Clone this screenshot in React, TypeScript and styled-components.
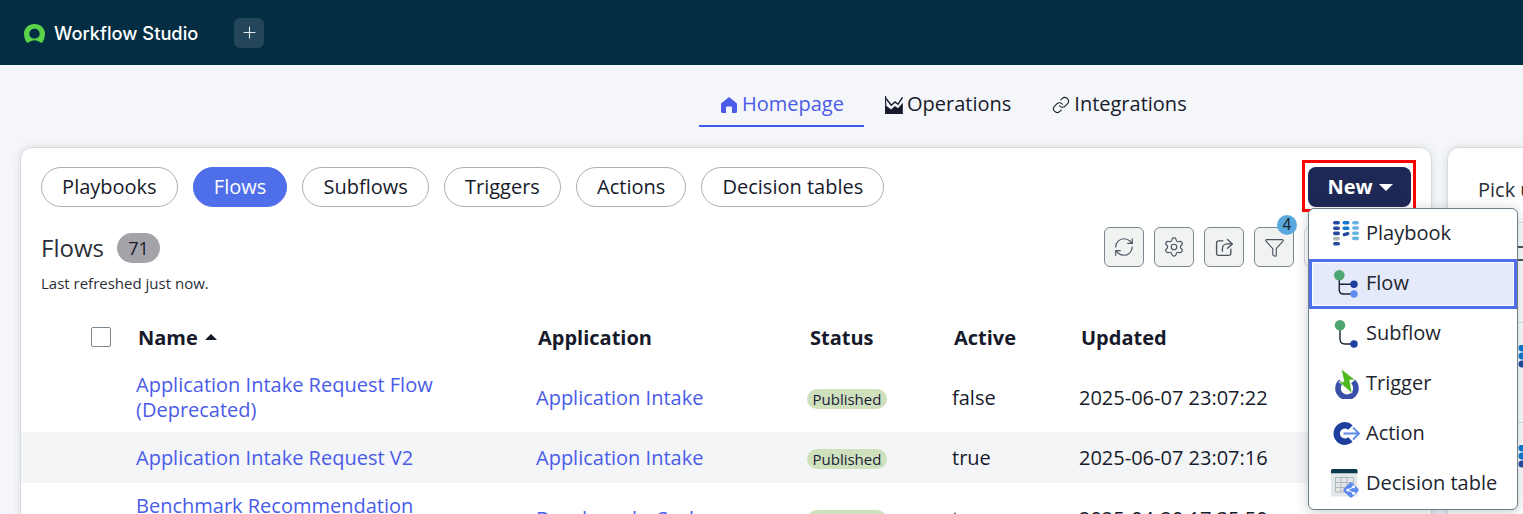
import React from "react";
import styled, { createGlobalStyle } from "styled-components";
import { RefreshCw, Settings, Funnel, Link, Plus } from "lucide-react";

const Global = createGlobalStyle`
  html, body { margin: 0; height: 514px; overflow: hidden; background: #f4f6f9; }
  * { box-sizing: border-box; }
  body { font-family: "Open Sans", "Noto Sans", sans-serif; color: #171a2b; }
`;

const Page = styled.div`width: 1523px; height: 514px; overflow: hidden;`;

const Header = styled.header`
  height: 65px; background: #032d42; display: flex; align-items: center; padding: 0 24px 0 24px;
`;
const Brand = styled.div`display: flex; align-items: center; gap: 9px; color: #fff; font: 500 18.3px/1 "Inter", sans-serif; width: 210px; padding-top: 1px;`;
const AddButton = styled.button`
  width: 30px; height: 30px; border: 0; border-radius: 6px; background: #24465a; color: #e3e8eb;
  display: flex; align-items: center; justify-content: center; padding: 0;
`;

const Nav = styled.nav`display: flex; height: 62px; padding: 19px 0 0 699px;`;
const NavTab = styled.a<{ $active?: boolean }>`
  display: flex; align-items: flex-start; gap: 4px; padding: 6px 20px 0 21px; height: 43px;
  font-size: 20px; line-height: 27px; white-space: nowrap;
  color: ${(p) => (p.$active ? "#4a5be8" : "#171a2b")};
  border-bottom: 2px solid ${(p) => (p.$active ? "#3f5bea" : "transparent")};
  svg { flex: none; margin-top: 6px; }
`;

const Columns = styled.main`display: grid; grid-template-columns: 1412px 200px; gap: 15px; padding: 20px 0 0 20px;`;
const Card = styled.section`
  background: #fff; border: 1px solid #d8dbde; border-radius: 12px; height: 600px;
  box-shadow: 0 0 8px rgba(40, 50, 60, 0.12);
`;
const TopRow = styled.div`display: flex; justify-content: space-between; padding: 19px 20px 0;`;
const Pills = styled.div`display: flex; gap: 15px;`;
const Pill = styled.button<{ $active?: boolean }>`
  height: 40px; padding: 0 20.1px; border-radius: 20px; font: 400 20px/1 "Open Sans", sans-serif; white-space: nowrap;
  border: 1px solid ${(p) => (p.$active ? "#4f6eea" : "#a9b0b5")};
  background: ${(p) => (p.$active ? "#4f6eea" : "#fff")};
  color: ${(p) => (p.$active ? "#fff" : "#171a2b")};
`;
const NewWrap = styled.div`position: relative; width: 103px; height: 40px; z-index: 5;`;
const NewButton = styled.button`
  width: 100%; height: 100%; border: 0; border-radius: 8px; background: #1d2855; color: #fff;
  font: 700 20px/1 "Open Sans", sans-serif; display: flex; align-items: center; justify-content: center; gap: 6px; padding: 0 0 0 1px;
`;
const Caret = styled.span<{ $dir?: "up" | "down"; $size?: number; $height?: number; $color?: string }>`
  display: inline-block; width: 0; height: 0;
  border-left: ${(p) => p.$size ?? 7}px solid transparent;
  border-right: ${(p) => p.$size ?? 7}px solid transparent;
  ${(p) => (p.$dir === "up" ? "border-bottom" : "border-top")}: ${(p) => p.$height ?? 6}px solid ${(p) => p.$color ?? "#fff"};
`;
const Highlight = styled.div`
  position: absolute; left: -6px; right: -5px; top: -7px; bottom: -5px; border: 3px solid #f00; pointer-events: none;
`;
const Menu = styled.div`
  position: absolute; left: 0; top: 41px; width: 210px; height: 302px; background: #fff;
  border: 1px solid #6f7f88; border-radius: 6px; box-shadow: 0 2px 12px rgba(30, 40, 50, 0.25);
`;
const MenuItem = styled.div<{ $selected?: boolean }>`
  height: 50px; display: flex; align-items: center; gap: 5px; font-size: 20px; color: #22262e;
  padding-left: ${(p) => (p.$selected ? 19 : 22)}px;
  background: ${(p) => (p.$selected ? "#e5eafa" : "transparent")};
  border: ${(p) => (p.$selected ? "3px solid #4f6eea" : "0")};
  box-shadow: ${(p) => (p.$selected ? "inset 0 0 0 1px #fff" : "none")};
  svg { flex: none; }
`;
const MenuLabel = styled.span`margin-bottom: 4px;`;

const TitleRow = styled.div`display: flex; justify-content: space-between; padding: 20px 20px 0;`;
const TitleBlock = styled.div`padding-top: 6px;`;
const TitleLine = styled.div`display: flex; align-items: center; gap: 13px; height: 30px;`;
const Title = styled.h2`margin: 0; font-size: 24px; font-weight: 400; line-height: 30px; color: #2b2f38;`;
const CountBadge = styled.span`
  width: 43px; height: 30px; border-radius: 15px; background: #a5a3aa; display: flex; align-items: center; justify-content: center; font-size: 18px;
`;
const Refreshed = styled.div`font-size: 15px; line-height: 20px; margin-top: 10px; color: #2b2f38;`;
const Tools = styled.div`display: flex; gap: 10px;`;
const ToolButton = styled.button`
  position: relative; width: 40px; height: 40px; border: 1px solid #7a8690; border-radius: 6px; background: #f1f3f3; color: #4a5560;
  display: flex; align-items: center; justify-content: center; padding: 0;
`;
const FilterCount = styled.span`
  position: absolute; left: 22px; top: -13px; width: 20px; height: 20px; border-radius: 50%; background: #5aa9de; color: #1c2430;
  font-size: 16px; line-height: 20px; text-align: center;
`;
const SearchBox = styled.div`width: 107px; height: 40px; border: 1px solid #d5d9dc; border-radius: 6px;`;

const TableGrid = styled.div`
  display: grid; grid-template-columns: 115px 400px 272px 144px 127px 1fr; align-items: center;
`;
const HeadRow = styled(TableGrid)`height: 50px; margin-top: 19px; font-weight: 700; font-size: 20px; line-height: 27px;`;
const HeadCell = styled.div`padding-left: 2px; display: flex; align-items: center; gap: 7px;`;
const CheckCell = styled.div`display: flex; justify-content: flex-end; padding-right: 25px;`;
const CheckBox = styled.span`width: 20px; height: 20px; border: 1px solid #7a8690; border-radius: 2px; background: #fff;`;
const Row = styled(TableGrid)<{ $shade?: boolean }>`
  padding: 10px 0; min-height: 51px; font-size: 20px; line-height: 25px;
  background: ${(p) => (p.$shade ? "#f4f5f7" : "#fff")};
`;
const FirstCell = styled.div``;
const LinkText = styled.a`color: #4a5be8; display: block; max-width: 330px;`;
const Status = styled.span`
  display: inline-block; margin-left: -1px; height: 20px; padding: 0 5.5px; border-radius: 10px; background: #cfe0bd; color: #1c2038; font-size: 15px; line-height: 20px;
`;

const PickTitle = styled.div`font-size: 20px; line-height: 27px; padding: 28px 0 0 30px; height: 74px; white-space: nowrap; color: #2b2f38;`;
const RecentRow = styled.div`height: 100px; border-top: 1px solid #dcdfe2; padding: 22px 0 0 70px;`;

const Logo = () => (
  <svg width="21" height="19" viewBox="0 0 21 19">
    <path d="M10.5 0C16.3 0 21 4.2 21 9.4c0 3.4-1 6.6-2.7 9.1-.5.6-2.2-.3-3-.8a8.8 8.8 0 0 0-9.6 0c-.8.5-2.5 1.4-3 .8C1 16 0 12.8 0 9.4 0 4.2 4.7 0 10.5 0Zm0 4.8c-3 0-5.2 2.1-5.2 4.9s2.2 4.9 5.2 4.9 5.2-2.1 5.2-4.9-2.2-4.9-5.2-4.9Z" fill="#5ad34b" />
  </svg>
);
const HomeIcon = () => (
  <svg width="18" height="18" viewBox="0 0 18 18">
    <path d="M9 1 17 7.6V15.5A1.5 1.5 0 0 1 15.5 17H12V11.5A1 1 0 0 0 11 10.5H7A1 1 0 0 0 6 11.5V17H2.5A1.5 1.5 0 0 1 1 15.5V7.6Z" fill="#4a5be8" />
  </svg>
);
const OpsIcon = () => (
  <svg width="18" height="18" viewBox="0 0 18 18">
    <path d="M.6 0V17.4H18" fill="none" stroke="#171a2b" strokeWidth="1.1" />
    <path d="M1 9.5 6 13.5 10 10 13 12.2 17.8 6.8V17.4H1Z" fill="#171a2b" />
    <path d="M1 2.5 6.3 9.3 10 6 13 8.3 17.5 1.5" fill="none" stroke="#171a2b" strokeWidth="1.4" />
  </svg>
);
const ShareBoxIcon = () => (
  <svg width="19" height="19" viewBox="0 0 18 18" fill="none" stroke="#4a5560" strokeWidth="1.3" strokeLinecap="round" strokeLinejoin="round">
    <path d="M7.5 2.7H3.4A1.9 1.9 0 0 0 1.5 4.6v10a1.9 1.9 0 0 0 1.9 1.9h9.7a1.9 1.9 0 0 0 1.9-1.9v-4" />
    <path d="M11.8 1.5 16.5 5.6 11.8 9.7M16.3 5.6H11.5a4.5 4.5 0 0 0-4.5 4.5v2.4" />
  </svg>
);
const PlaybookIcon = () => (
  <svg width="30" height="30" viewBox="0 0 30 30">
    <g fill="#24499f">
      <rect x="2" y="2" width="7" height="3.6" rx="1.8" />
      <rect x="2" y="7.4" width="7" height="3.6" rx="1.8" />
      <rect x="2" y="12.6" width="7" height="3.6" rx="1.8" />
      <rect x="2" y="23" width="7" height="3.6" rx="1.8" />
      <rect x="11.5" y="13.4" width="7" height="3.4" rx="1.7" transform="rotate(-14 15 15)" />
    </g>
    <rect x="2" y="17.8" width="7" height="3.6" rx="1.8" fill="#b2b8ba" />
    <g fill="#0f7ad0">
      <rect x="11.5" y="2" width="7" height="3.6" rx="1.8" />
      <rect x="11.5" y="7.4" width="7" height="3.6" rx="1.8" />
    </g>
    <g fill="#6ab4e4">
      <rect x="21" y="2" width="7" height="3.6" rx="1.8" />
      <rect x="21" y="7.2" width="7" height="3.6" rx="1.8" />
      <rect x="21" y="12.4" width="7" height="3.6" rx="1.8" />
      <rect x="21" y="17.6" width="7" height="3.6" rx="1.8" />
    </g>
  </svg>
);
const FlowIcon = () => (
  <svg width="30" height="30" viewBox="0 0 30 30">
    <path d="M8.3 10V21Q8.3 25 12.5 25H20M8.3 15.3H20" fill="none" stroke="#1b2433" strokeWidth="1.4" />
    <circle cx="8.3" cy="6.3" r="5.3" fill="#4fa76f" />
    <circle cx="23" cy="15.3" r="3.7" fill="#1f3f9e" />
    <circle cx="23" cy="25" r="3.7" fill="#5d8aee" />
  </svg>
);
const SubflowIcon = () => (
  <svg width="30" height="30" viewBox="0 0 30 30">
    <path d="M9 10V20Q9 25 14 25H20" fill="none" stroke="#1b2433" strokeWidth="1.4" />
    <circle cx="9" cy="6.3" r="5.3" fill="#4fa76f" />
    <circle cx="23" cy="25" r="3.7" fill="#1f3f9e" />
  </svg>
);
const TriggerIcon = () => (
  <svg width="30" height="30" viewBox="0 0 30 30">
    <path d="M10 12.5A9 9 0 1 0 22 12.5" fill="none" stroke="#3a4fa8" strokeWidth="5.6" />
    <path d="M10.3 0 24.3 11H18.7L21 24.3 7.7 12.7H13Z" fill="#4eb81e" stroke="#fff" strokeWidth="0.6" />
  </svg>
);
const ActionIcon = () => (
  <svg width="30" height="30" viewBox="0 0 30 30">
    <path d="M19.5 8.5A8.2 8.2 0 1 0 19.5 20.5" fill="none" stroke="#1f3f9e" strokeWidth="6.4" />
    <path d="M12.5 14.5H27.5M22 8.5 28 14.5 22 20.5" fill="none" stroke="#fff" strokeWidth="4" />
    <path d="M12.5 14.5H27.5M22 8.5 28 14.5 22 20.5" fill="none" stroke="#5d8aee" strokeWidth="1.8" />
  </svg>
);
const TableIcon = () => (
  <svg width="30" height="30" viewBox="0 0 30 30">
    <rect x="0" y="0" width="26.5" height="27.5" rx="1.5" fill="#e3e7e9" />
    <path d="M0 4.2V1.5A1.5 1.5 0 0 1 1.5 0h23.5A1.5 1.5 0 0 1 26.5 1.5v2.7Z" fill="#0c3a50" />
    <path d="M4.5 8.5H22.5M4.5 13.5H22.5M4.5 18.5H22.5M4.5 23H18M4.5 8.5V23M10 8.5V23M16 8.5V23M22.5 8.5V19" fill="none" stroke="#aab2b6" strokeWidth="0.9" />
    <rect x="14" y="15" width="12" height="12" rx="2" transform="rotate(45 20 21)" fill="#5d8aee" />
    <path d="M16.8 21 22.6 17.8M16.8 21 22.6 24.2" stroke="#fff" strokeWidth="1" />
    <g fill="#fff">
      <circle cx="16.8" cy="21" r="1.5" />
      <circle cx="22.6" cy="17.8" r="1.5" />
      <circle cx="22.6" cy="24.2" r="1.5" />
    </g>
  </svg>
);
const LinesIcon = () => (
  <svg width="30" height="16" viewBox="0 0 30 16">
    <path d="M0 1H30M0 14H30" stroke="#171a2b" strokeWidth="1.6" />
  </svg>
);
const DotsIcon = () => (
  <svg width="30" height="24" viewBox="0 0 30 24">
    <circle cx="4" cy="3" r="3.5" fill="#0f7ad0" />
    <circle cx="4" cy="11" r="3.5" fill="#0f7ad0" />
    <circle cx="4" cy="19" r="3.5" fill="#24499f" />
  </svg>
);

const pills = ["Playbooks", "Flows", "Subflows", "Triggers", "Actions", "Decision tables"];
const menuItems = [
  { label: "Playbook", icon: <PlaybookIcon /> },
  { label: "Flow", icon: <FlowIcon />, selected: true },
  { label: "Subflow", icon: <SubflowIcon /> },
  { label: "Trigger", icon: <TriggerIcon /> },
  { label: "Action", icon: <ActionIcon /> },
  { label: "Decision table", icon: <TableIcon /> },
];
const rows = [
  { name: "Application Intake Request Flow (Deprecated)", app: "Application Intake", active: "false", updated: "2025-06-07 23:07:22" },
  { name: "Application Intake Request V2", app: "Application Intake", active: "true", updated: "2025-06-07 23:07:16", shade: true },
  { name: "Benchmark Recommendation Engine", app: "Benchmarks Scale", active: "true", updated: "2025-04-20 17:35:50" },
];

export default function App() {
  return (
    <Page>
      <Global />
      <Header>
        <Brand><Logo />Workflow Studio</Brand>
        <AddButton aria-label="Add"><Plus size={19} strokeWidth={1.4} /></AddButton>
      </Header>
      <Nav>
        <NavTab $active><HomeIcon />Homepage</NavTab>
        <NavTab><OpsIcon />Operations</NavTab>
        <NavTab><Link size={18} strokeWidth={1.4} />Integrations</NavTab>
      </Nav>
      <Columns>
        <Card>
          <TopRow>
            <Pills>
              {pills.map((p) => <Pill key={p} $active={p === "Flows"}>{p}</Pill>)}
            </Pills>
            <NewWrap>
              <NewButton>New<Caret $size={7} $height={7} /></NewButton>
              <Highlight />
              <Menu>
                {menuItems.map((m) => (
                  <MenuItem key={m.label} $selected={m.selected}>{m.icon}<MenuLabel>{m.label}</MenuLabel></MenuItem>
                ))}
              </Menu>
            </NewWrap>
          </TopRow>
          <TitleRow>
            <TitleBlock>
              <TitleLine><Title>Flows</Title><CountBadge>71</CountBadge></TitleLine>
              <Refreshed>Last refreshed just now.</Refreshed>
            </TitleBlock>
            <Tools>
              <ToolButton aria-label="Refresh"><RefreshCw size={22} strokeWidth={1.3} /></ToolButton>
              <ToolButton aria-label="Settings"><Settings size={22} strokeWidth={1.3} /></ToolButton>
              <ToolButton aria-label="Share"><ShareBoxIcon /></ToolButton>
              <ToolButton aria-label="Filter"><Funnel size={21} strokeWidth={1.3} /><FilterCount>4</FilterCount></ToolButton>
              <SearchBox />
            </Tools>
          </TitleRow>
          <HeadRow>
            <CheckCell><CheckBox /></CheckCell>
            <HeadCell>Name<Caret $dir="up" $size={6} $height={6} $color="#171a2b" /></HeadCell>
            <HeadCell>Application</HeadCell>
            <HeadCell>Status</HeadCell>
            <HeadCell>Active</HeadCell>
            <HeadCell>Updated</HeadCell>
          </HeadRow>
          {rows.map((r) => (
            <Row key={r.name} $shade={r.shade}>
              <FirstCell />
              <LinkText>{r.name}</LinkText>
              <LinkText>{r.app}</LinkText>
              <div><Status>Published</Status></div>
              <div>{r.active}</div>
              <div>{r.updated}</div>
            </Row>
          ))}
        </Card>
        <Card>
          <PickTitle>Pick up where you left off</PickTitle>
          <RecentRow><LinesIcon /></RecentRow>
          <RecentRow><DotsIcon /></RecentRow>
          <RecentRow><DotsIcon /></RecentRow>
        </Card>
      </Columns>
    </Page>
  );
}
